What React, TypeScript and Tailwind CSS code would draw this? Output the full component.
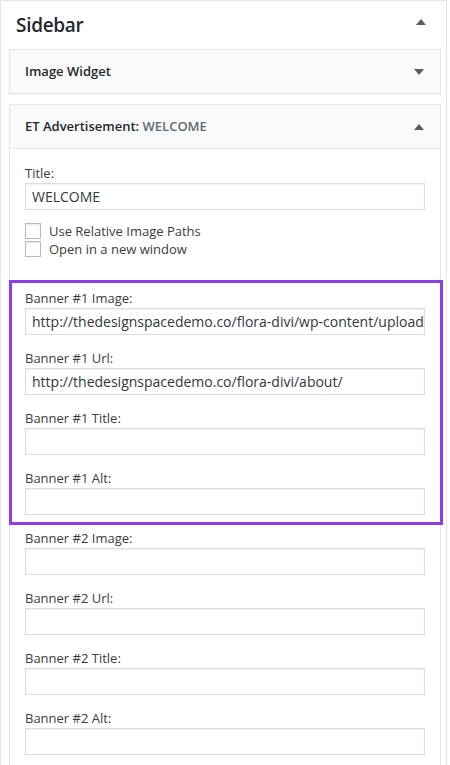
import React from "react";

const Caret = ({ up }: { up?: boolean }) => (
  <svg width="10" height="6" viewBox="0 0 10 6" className="block">
    {up ? <path d="M0 6 L5 0 L10 6 Z" fill="#555d66" /> : <path d="M0 0 L5 6 L10 0 Z" fill="#555d66" />}
  </svg>
);

const Field = ({ label, value, last }: { label: string; value?: string; last?: boolean }) => (
  <div className={last ? "" : "mb-[13px]"}>
    <div className="h-[20px] leading-[20px] text-[13px] text-[#3c3c3c]">{label}</div>
    <div className="h-[27px] border border-[#ddd] bg-white shadow-[inset_0_1px_2px_rgba(0,0,0,0.07)] px-[6px] flex items-center overflow-hidden whitespace-nowrap text-[14px] text-[#32373c]">
      {value}
    </div>
  </div>
);

const Check = ({ label }: { label: string }) => (
  <div className="h-[18px] flex items-center gap-[8px]">
    <div className="w-[16px] h-[16px] border border-[#b4b9be] bg-white shadow-[inset_0_1px_2px_rgba(0,0,0,0.1)]" />
    <span className="text-[13px] text-[#3c3c3c] leading-[18px]">{label}</span>
  </div>
);

export default function App() {
  return (
    <div className="w-[450px] h-[765px] overflow-hidden bg-white" style={{ fontFamily: '"Open Sans", "Noto Sans", sans-serif' }}>
      <div className="w-[447px] border border-[#e5e5e5] bg-white min-h-[800px]">
        <div className="h-[48px] flex items-center justify-between pl-[15px] pr-[20px]">
          <span className="text-[19px] font-semibold text-[#23282d] tracking-[-0.3px]">Sidebar</span>
          <div className="-mt-[6px]"><Caret up /></div>
        </div>
        <div className="ml-[8px] w-[432px]">
          <div className="h-[45px] border border-[#e5e5e5] bg-[#fafafa] flex items-center justify-between pl-[15px] pr-[16px] shadow-[0_1px_1px_rgba(0,0,0,0.04)]">
            <span className="text-[13px] font-semibold text-[#23282d]">Image Widget</span>
            <Caret />
          </div>
          <div className="mt-[10px] border border-[#e5e5e5] bg-white">
            <div className="h-[44px] border-b border-[#e5e5e5] bg-[#fafafa] flex items-center justify-between pl-[15px] pr-[16px]">
              <span className="text-[13px] font-semibold text-[#23282d]">
                ET Advertisement: <span className="text-[#606a73]">WELCOME</span>
              </span>
              <Caret up />
            </div>
            <div className="px-[15px] pt-[15px]">
              <div className="h-[19px] leading-[19px] text-[13px] text-[#3c3c3c]">Title:</div>
              <div className="h-[27px] border border-[#ddd] bg-white shadow-[inset_0_1px_2px_rgba(0,0,0,0.07)] px-[6px] flex items-center text-[14px] text-[#32373c]">
                WELCOME
              </div>
              <div className="mt-[12px] flex flex-col">
                <Check label="Use Relative Image Paths" />
                <Check label="Open in a new window" />
              </div>
              <div className="mt-[22px] -ml-[16px] -mr-[18px] border-[3px] border-[#8e3ee6] pt-[5px] pb-[7px] pl-[13px] pr-[15px]">
                <Field label="Banner #1 Image:" value="http://thedesignspacedemo.co/flora-divi/wp-content/uploads/2017/banner.jpg" />
                <Field label="Banner #1 Url:" value="http://thedesignspacedemo.co/flora-divi/about/" />
                <Field label="Banner #1 Title:" />
                <Field label="Banner #1 Alt:" last />
              </div>
              <div className="mt-[3px]">
                <Field label="Banner #2 Image:" />
                <Field label="Banner #2 Url:" />
                <Field label="Banner #2 Title:" />
                <Field label="Banner #2 Alt:" />
              </div>
            </div>
          </div>
        </div>
      </div>
    </div>
  );
}
